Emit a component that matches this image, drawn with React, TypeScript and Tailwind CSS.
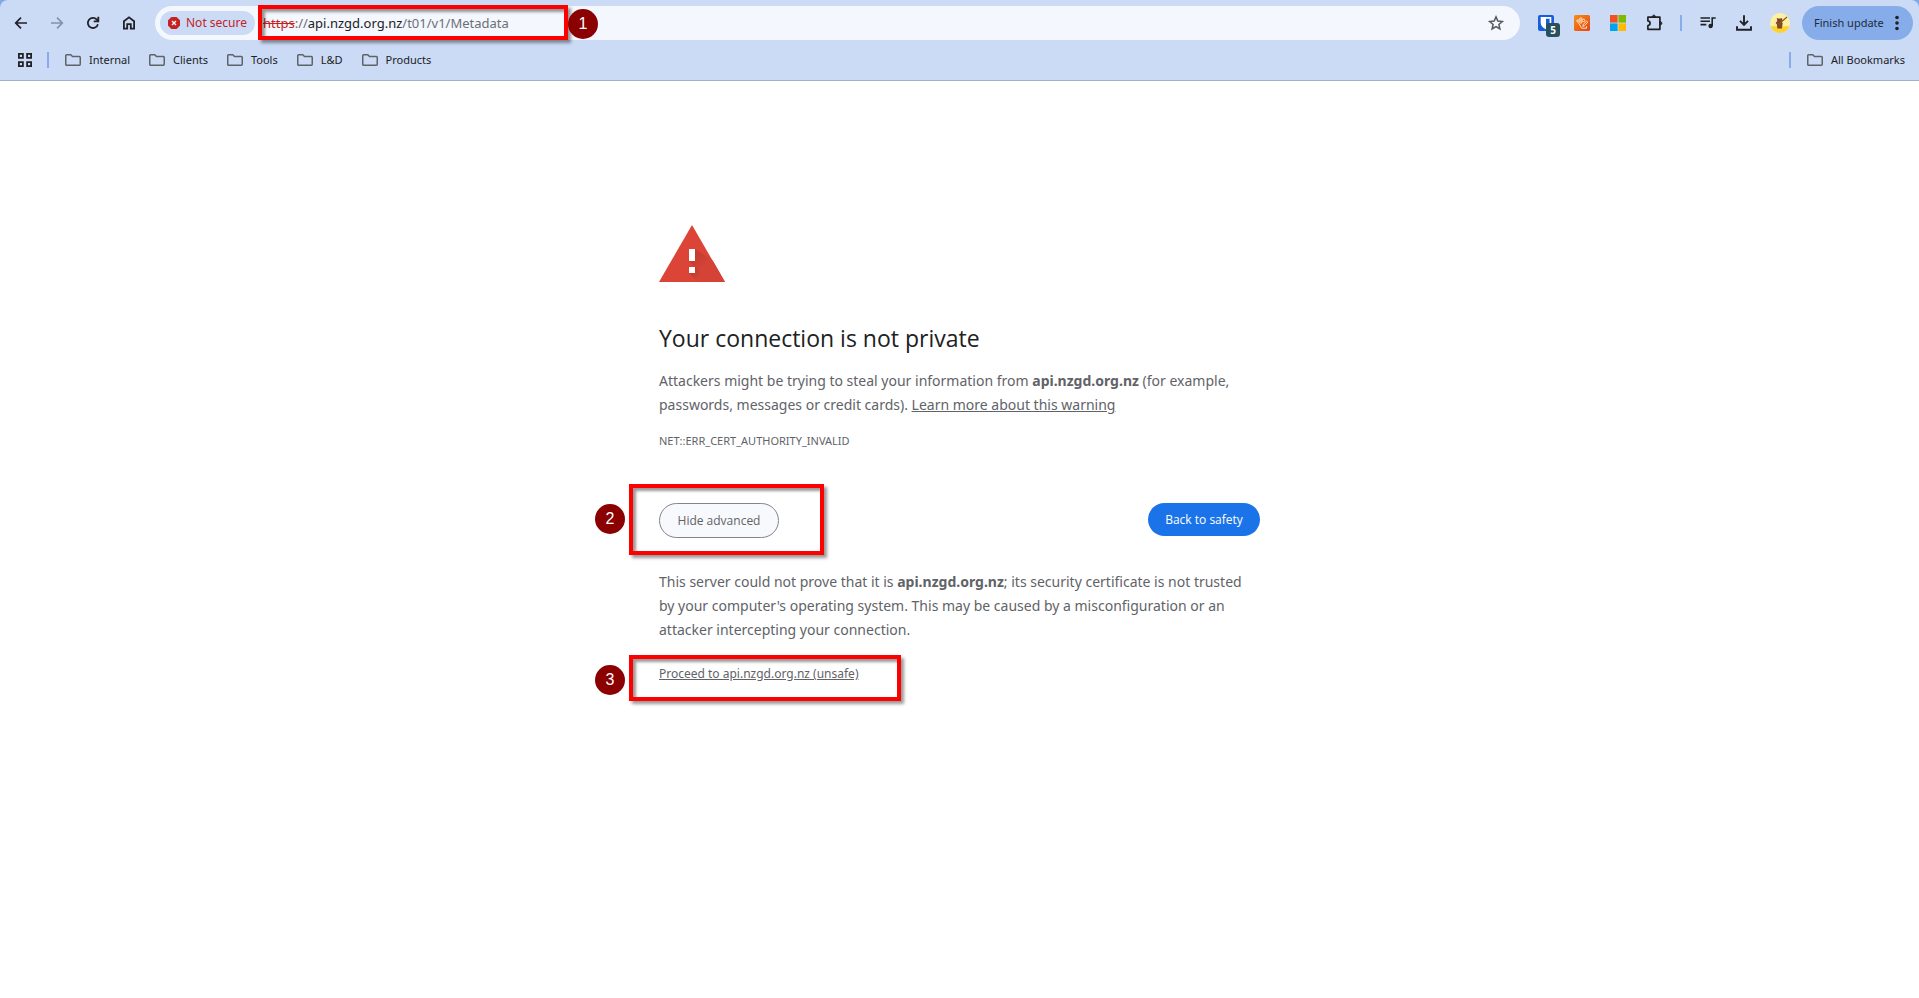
import React, { useState } from "react"


const bookmarks = ['Internal', 'Clients', 'Tools', 'L&D', 'Products']

function FolderIcon(){
    return (
        <svg width="18" height="14" viewBox="0 0 18 14" fill="none" stroke="#5f6368" strokeWidth="1.5" strokeLinejoin="round" aria-hidden="true">
            <path d="M1.75 2.6c0-.5.4-.85.85-.85h4.2l1.7 1.75h6.9c.5 0 .85.4.85.85v7c0 .5-.4.9-.85.9H2.6c-.5 0-.85-.4-.85-.9z" />
        </svg>
    )
}

function ToolButton({label, children}: {label: string, children: React.ReactNode}){
    return (
        <button type="button" aria-label={label} className="relative flex h-8 w-9 shrink-0 items-center justify-center text-[#202124]">
            {children}
        </button>
    )
}

// numbered red dot that sits beside a highlighted area
function Marker({num, className}: {num: number, className: string}){
    return (
        <span className={`absolute z-10 flex h-[30px] w-[30px] items-center justify-center rounded-full bg-[#8b0000] font-['Liberation_Sans',sans-serif] text-base leading-4 text-white ${className}`}>
            {num}
        </span>
    )
}

function RedBox({className}: {className: string}){
    return (
        <span className={`pointer-events-none absolute border-4 border-[#ff0000] shadow-[3px_3px_3px_rgba(0,0,0,0.4),inset_3px_3px_3px_rgba(0,0,0,0.4)] ${className}`} />
    )
}

function Toolbar(){

    const [path, setPath] = useState('/t01/v1/Metadata')

    return (
        <div className="flex items-center pl-[3px] pr-1.5 pt-1.5">
            <ToolButton label="Back">
                <svg width="20" height="20" viewBox="0 0 20 20" fill="none" stroke="currentColor" strokeWidth="1.7">
                    <path d="M16 10H5M10 4.7 4.7 10l5.3 5.3" />
                </svg>
            </ToolButton>
            <ToolButton label="Forward">
                <svg width="20" height="20" viewBox="0 0 20 20" fill="none" stroke="#8591a8" strokeWidth="1.7">
                    <path d="M4 10h11M10 4.7l5.3 5.3-5.3 5.3" />
                </svg>
            </ToolButton>
            <ToolButton label="Reload">
                <svg width="20" height="20" viewBox="0 0 20 20" fill="none" stroke="currentColor" strokeWidth="1.8">
                    <path d="M14.9 11.2a5.1 5.1 0 1 1-1.3-4.9l1.5 1.5" />
                    <path d="M15.3 3.8v4.5h-4.6" />
                </svg>
            </ToolButton>
            <ToolButton label="Home">
                <svg width="20" height="20" viewBox="0 0 20 20" fill="none" stroke="currentColor" strokeWidth="1.8">
                    <path d="M4.9 15.7V8.3L10 4.3l5.1 4v7.4h-3.3v-4.6H8.2v4.6z" />
                </svg>
            </ToolButton>

            <div className="ml-2 flex h-[34px] flex-1 items-center rounded-full bg-[#f4f7fd] pl-[5px] pr-3.5">
                <button type="button" className="flex h-6 w-[95px] shrink-0 items-center gap-1.5 rounded-full bg-[#cbdbf6] pl-2 text-xs text-[#c5221f]">
                    <svg width="12" height="12" viewBox="0 0 12 12" aria-hidden="true">
                        <path d="M3.6 0h4.8L12 3.6v4.8L8.4 12H3.6L0 8.4V3.6z" fill="#c5221f" stroke="#c5221f" strokeLinejoin="round" strokeWidth=".4" />
                        <path d="m4 4 4 4M8 4 4 8" stroke="#f4f7fd" strokeWidth="1.4" />
                    </svg>
                    <span className="whitespace-nowrap">Not secure</span>
                </button>
                <div className="relative ml-2 flex flex-1 items-center text-[13px] leading-5 text-[#6b6f76]">
                    <label htmlFor="address" className="whitespace-nowrap">
                        <span className="text-[#c5221f] line-through">https</span>
                        <span>://</span>
                        <span className="text-[#202124]">api.nzgd.org.nz</span>
                    </label>
                    <input id="address" type="text" value={path} onChange={(e) => setPath(e.target.value)} className="min-w-0 flex-1 bg-transparent outline-none" />
                    <RedBox className="-left-[5px] -top-2 h-[35px] w-[310px]" />
                    <Marker num={1} className="left-[305px] -top-1" />
                </div>
                <button type="button" aria-label="Bookmark this tab">
                    <svg width="20" height="20" viewBox="0 0 20 20" fill="none" stroke="#55595f" strokeWidth="1.5">
                        <path d="m10 3.9 1.8 4.2 4.5.4-3.4 3 1 4.5-3.9-2.4L6.1 16l1-4.5-3.4-3 4.5-.4z" />
                    </svg>
                </button>
            </div>

            <div className="ml-2 flex items-center">
                <ToolButton label="Password manager">
                    <svg width="16" height="16" viewBox="0 0 16 16">
                        <rect width="16" height="16" rx="2" fill="#175ddc" />
                        <path d="M2.7 2h10.6v6c0 3-2.5 4.9-5.3 6.3C5.2 12.9 2.7 11 2.7 8z" fill="#fff" />
                        <path d="M8 3.7h3.6V8c0 1.9-1.8 3.3-3.6 4.4z" fill="#175ddc" />
                    </svg>
                    <span className="absolute left-[18px] top-4 flex h-3.5 w-3.5 items-center justify-center rounded-[3px] bg-[#28505c] text-[10px] font-bold leading-3 text-white">5</span>
                </ToolButton>
                <ToolButton label="Notes extension">
                    <svg width="16" height="16" viewBox="0 0 16 16" fill="none" stroke="#ffe3cc" strokeWidth="1">
                        <defs>
                            <linearGradient id="orange" x1="0" y1="0" x2="1" y2="1">
                                <stop offset="0" stopColor="#f39019" />
                                <stop offset="1" stopColor="#e8420f" />
                            </linearGradient>
                        </defs>
                        <rect width="16" height="16" rx="1.5" fill="url(#orange)" stroke="none" />
                        <circle cx="4" cy="6" r="1.2" />
                        <circle cx="6.8" cy="4" r="1.2" />
                        <circle cx="6.8" cy="7" r="1.2" />
                        <circle cx="9.6" cy="5.4" r="1.2" />
                        <path d="M4.5 8l3.2 5.2h4.8v-2M8.8 11.4l.6-2L12.6 6l1.2 1.2-3.200 3.300z" />
                    </svg>
                </ToolButton>
                <ToolButton label="Microsoft">
                    <svg width="16" height="16" viewBox="0 0 16 16">
                        <path d="M0 0h7.6v7.6H0z" fill="#f25022" />
                        <path d="M8.4 0H16v7.6H8.4z" fill="#7fba00" />
                        <path d="M0 8.4h7.6V16H0z" fill="#00a4ef" />
                        <path d="M8.4 8.4H16V16H8.4z" fill="#ffb900" />
                    </svg>
                </ToolButton>
                <ToolButton label="Extensions">
                    <svg width="20" height="20" viewBox="0 0 20 20" fill="none" stroke="currentColor" strokeWidth="1.7" strokeLinejoin="round">
                        <path d="M3.9 4.1h12v12.2h-12v-3.6c2.9-.5 2.9-4.3 0-4.8z" />
                        <path d="M8.2 3.7c.2-2.1 3.2-2.1 3.4 0zM16.3 8.6c2.1.2 2.1 3.2 0 3.4z" fill="currentColor" strokeWidth=".8" />
                    </svg>
                </ToolButton>
                <div className="mx-2 h-4 w-0.5 bg-[#86ade9]" />
                <ToolButton label="Media controls">
                    <svg width="20" height="20" viewBox="0 0 20 20" fill="none" stroke="currentColor" strokeWidth="1.6">
                        <path d="M2.5 5H12M2.5 8.3H12M2.5 11.6h5.8M14.2 13V5h3.5" />
                        <circle cx="12.6" cy="13" r="2.2" fill="currentColor" stroke="none" />
                    </svg>
                </ToolButton>
                <ToolButton label="Downloads">
                    <svg width="20" height="20" viewBox="0 0 20 20" fill="none" stroke="currentColor" strokeWidth="1.9">
                        <path d="M10 2.2v9.3M6 7.8l4 4 4-4M3 13.2v3.5h14v-3.5" />
                    </svg>
                </ToolButton>
                <ToolButton label="Profile">
                    <svg width="20" height="20" viewBox="0 0 20 20">
                        <circle cx="10" cy="10" r="10" fill="#fdf0a0" />
                        <path d="M.6 13.3h18.8a10 10 0 0 1-18.8 0z" fill="#fdd231" />
                        <path d="M6.7 5l1.4.5h3l1-.6.3 2.5-1.2 1.4 1.5 1.3-.8 5.3H7.4l-.5-4-1.3-1.7 1.7-1.4z" fill="#7d4527" />
                        <path d="m9 11 8-7M6.2 9.2l5.5 4.5" stroke="#8a5523" strokeWidth="1.1" />
                    </svg>
                </ToolButton>
            </div>

            <button type="button" className="ml-1 flex h-[34px] w-[111px] items-center justify-between rounded-full bg-[#86ade9] pl-3 pr-3.5 text-[11px] text-[#202b40]">
                <span className="whitespace-nowrap">Finish update</span>
                <svg width="4" height="16" viewBox="0 0 4 16" fill="#202124" aria-hidden="true">
                    <circle cx="2" cy="2.5" r="1.8" />
                    <circle cx="2" cy="8" r="1.8" />
                    <circle cx="2" cy="13.5" r="1.8" />
                </svg>
            </button>
        </div>
    )
}

function BookmarksBar(){
    return (
        <nav className="flex h-10 items-center pl-[18px] pr-3.5 text-[11px] text-[#202124]">
            <button type="button" aria-label="Apps">
                <svg width="14" height="14" viewBox="0 0 14 14" fill="none" stroke="#202124" strokeWidth="1.8">
                    <path d="M.9.9h4v4h-4zM9.1.9h4v4h-4zM.9 9.1h4v4h-4zM9.1 9.1h4v4h-4z" />
                </svg>
            </button>
            <div className="mx-[15px] h-4 w-0.5 bg-[#86ade9]" />
            <div className="flex items-center gap-[18px]">
                {bookmarks.map((name) => (
                    <button key={name} type="button" className="flex items-center gap-[7px]">
                        <FolderIcon />
                        <span>{name}</span>
                    </button>
                ))}
            </div>
            <div className="ml-auto mr-[15px] h-4 w-0.5 bg-[#86ade9]" />
            <button type="button" className="flex items-center gap-[7px]">
                <FolderIcon />
                <span>All Bookmarks</span>
            </button>
        </nav>
    )
}

function App(){

    return (
        <div className="min-h-screen bg-white font-['Noto_Sans',sans-serif]">
            <div className="bg-[#7fa8ea]">
                <header className="rounded-t-lg border-b border-[#a3b0cd] bg-[#cbdbf6]">
                    <Toolbar />
                    <BookmarksBar />
                </header>
            </div>

            <main className="mx-auto max-w-[601px] pt-36 text-sm leading-6 text-[#5f6368]">
                <svg width="66" height="57" viewBox="0 0 66 57" role="img" aria-label="Warning">
                    <defs>
                        <linearGradient id="shade" x1="33" y1="27" x2="46" y2="40" gradientUnits="userSpaceOnUse">
                            <stop offset="0" stopColor="#bd3b30" />
                            <stop offset="1" stopColor="#d54236" />
                        </linearGradient>
                        <linearGradient id="dotShade" x1="33" y1="46" x2="40" y2="53" gradientUnits="userSpaceOnUse">
                            <stop offset="0" stopColor="#bd3b30" />
                            <stop offset="1" stopColor="#d54236" />
                        </linearGradient>
                    </defs>
                    <path d="M33 0 66 57H0z" fill="#db4437" />
                    <path d="M36 24 54 36 66 57H51L30 36z" fill="url(#shade)" />
                    <path d="M36 42 51 57H39l-9-9z" fill="url(#dotShade)" />
                    <path d="M30 24h6v12h-6zM30 42h6v6h-6z" fill="#fff" />
                </svg>

                <h1 className="mt-10 font-['Open_Sans',sans-serif] text-[23px] leading-8 text-[#202124]">Your connection is not private</h1>
                <p className="mt-[15px]">
                    Attackers might be trying to steal your information from <strong>api.nzgd.org.nz</strong> (for example, passwords, messages or credit cards). <a href="#learn" className="underline">Learn more about this warning</a>
                </p>
                <p className="mt-3.5 text-[11px] leading-5">NET::ERR_CERT_AUTHORITY_INVALID</p>

                <div className="mt-[52px] flex items-start justify-between font-['Open_Sans',sans-serif] text-xs">
                    <div className="relative">
                        <button type="button" className="h-[35px] w-[120px] rounded-full border border-[#80868b] bg-[#f8f9fc]">Hide advanced</button>
                        <RedBox className="-left-[30px] -top-[19px] h-[71px] w-[195px]" />
                        <Marker num={2} className="-left-16 top-px" />
                    </div>
                    <button type="button" className="h-[33px] w-28 rounded-full bg-[#1a73e8] text-white">Back to safety</button>
                </div>

                <p className="mt-8 pr-2">
                    This server could not prove that it is <strong>api.nzgd.org.nz</strong>; its security certificate is not trusted by your computer's operating system. This may be caused by a misconfiguration or an attacker intercepting your connection.
                </p>
                <div className="relative mt-[22px] text-xs leading-5">
                    <a href="#proceed" className="underline">Proceed to api.nzgd.org.nz (unsafe)</a>
                    <RedBox className="-left-[30px] -top-[9px] h-[46px] w-[272px]" />
                    <Marker num={3} className="-left-16 top-px" />
                </div>
            </main>
        </div>
    )
}

export default App
